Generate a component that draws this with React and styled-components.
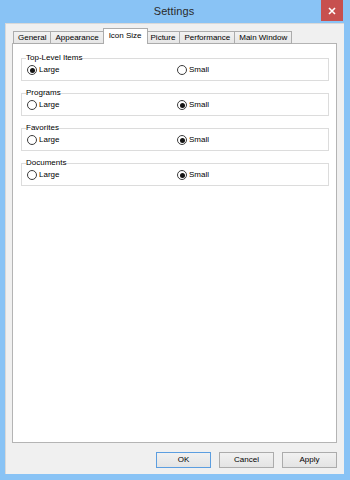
import React from "react";
import styled, { createGlobalStyle } from "styled-components";

const GlobalStyle = createGlobalStyle`
  html, body {
    margin: 0;
    padding: 0;
    background: #89c3f5;
  }
  body {
    font-family: "Liberation Sans", Arial, sans-serif;
  }
`;

const Frame = styled.div`
  width: 350px;
  height: 480px;
  background: #89c3f5;
  display: flex;
  flex-direction: column;
  box-sizing: border-box;
  padding: 0 6px 6px 5px;
`;

const TitleBar = styled.div`
  height: 23px;
  display: grid;
  grid-template-columns: 1fr auto 1fr;
  align-items: start;
  margin: 0 1px 0 0;
`;

const Title = styled.div`
  grid-column: 2;
  font-size: 11px;
  line-height: 23px;
  color: #2a2a2a;
  letter-spacing: 0.1px;
`;

const CloseButton = styled.div`
  grid-column: 3;
  justify-self: end;
  width: 22px;
  height: 21px;
  background: #c7504f;
  display: flex;
  align-items: center;
  justify-content: center;
`;

const Client = styled.div`
  flex: 1;
  display: flex;
  flex-direction: column;
  background: #f0f0f0;
  border: 1px solid #d9d9d9;
  border-bottom: none;
  border-right: none;
  box-sizing: border-box;
  padding: 5px 7px 6px 6px;
`;

const TabStrip = styled.div`
  display: flex;
  align-items: flex-end;
  height: 15px;
  padding-left: 1px;
  position: relative;
  z-index: 1;
  margin-bottom: -1px;
`;

const Tab = styled.div`
  box-sizing: border-box;
  height: ${(p) => (p.$active ? "16px" : "13px")};
  padding: ${(p) => (p.$active ? "0 5px" : "0 4px")};
  margin: ${(p) => (p.$active ? "0 -1px" : "0")};
  border: 1px solid #acacac;
  border-left-width: ${(p) => (p.$active || p.$first ? "1px" : "0")};
  border-bottom: ${(p) => (p.$active ? "none" : "1px solid #acacac")};
  background: ${(p) =>
    p.$active ? "#ffffff" : "linear-gradient(#f2f2f2, #e6e6e6)"};
  position: relative;
  z-index: ${(p) => (p.$active ? 2 : 1)};
  font-size: 8px;
  line-height: ${(p) => (p.$active ? "13px" : "11px")};
  color: #000;
  white-space: nowrap;
`;

const Panel = styled.div`
  flex: 1;
  background: #fff;
  border: 1px solid #b4b4b4;
  padding: 9px 7px 0 8px;
  display: flex;
  flex-direction: column;
  gap: 7px;
`;

const Group = styled.fieldset`
  margin: 0;
  border: 1px solid #dcdcdc;
  padding: 2px 0 5px 5px;
  min-width: 0;
`;

const Legend = styled.legend`
  padding: 0;
  margin-left: -1px;
  font-size: 8px;
  line-height: 10px;
  color: #000;
`;

const Options = styled.div`
  display: grid;
  grid-template-columns: 150px 1fr;
  align-items: center;
`;

const Option = styled.label`
  display: flex;
  align-items: center;
  gap: 2px;
  font-size: 8px;
  line-height: 10px;
  color: #000;
`;

const Radio = styled.span`
  box-sizing: border-box;
  width: 10px;
  height: 10px;
  border-radius: 50%;
  border: 1px solid #3b3b3b;
  background: #fff;
  display: flex;
  align-items: center;
  justify-content: center;
  &::after {
    content: "";
    width: 5px;
    height: 5px;
    border-radius: 50%;
    background: ${(p) => (p.$checked ? "#151515" : "transparent")};
  }
`;

const ButtonRow = styled.div`
  display: flex;
  justify-content: flex-end;
  gap: 8px;
  margin-top: 9px;
`;

const Button = styled.div`
  box-sizing: border-box;
  width: 55px;
  height: 16px;
  border: 1px solid ${(p) => (p.$default ? "#5c9ee0" : "#acacac")};
  background: linear-gradient(#f1f1f1, #e4e4e4);
  font-size: 8px;
  line-height: 14px;
  text-align: center;
  color: #000;
`;

const tabs = ["General", "Appearance", "Icon Size", "Picture", "Performance", "Main Window"];

const groups = [
  { title: "Top-Level Items", large: true },
  { title: "Programs", large: false },
  { title: "Favorites", large: false },
  { title: "Documents", large: false },
];

export default function App() {
  return (
    <>
      <GlobalStyle />
      <Frame>
        <TitleBar>
          <Title>Settings</Title>
          <CloseButton>
            <svg width="8" height="8" viewBox="0 0 8 8">
              <path d="M1 1 L7 7 M7 1 L1 7" stroke="#fff" strokeWidth="1.6" />
            </svg>
          </CloseButton>
        </TitleBar>
        <Client>
          <TabStrip>
            {tabs.map((t, i) => (
              <Tab key={t} $active={t === "Icon Size"} $first={i === 0}>
                {t}
              </Tab>
            ))}
          </TabStrip>
          <Panel>
            {groups.map((g) => (
              <Group key={g.title}>
                <Legend>{g.title}</Legend>
                <Options>
                  <Option>
                    <Radio $checked={g.large} />
                    Large
                  </Option>
                  <Option>
                    <Radio $checked={!g.large} />
                    Small
                  </Option>
                </Options>
              </Group>
            ))}
          </Panel>
          <ButtonRow>
            <Button $default>OK</Button>
            <Button>Cancel</Button>
            <Button>Apply</Button>
          </ButtonRow>
        </Client>
      </Frame>
    </>
  );
}
